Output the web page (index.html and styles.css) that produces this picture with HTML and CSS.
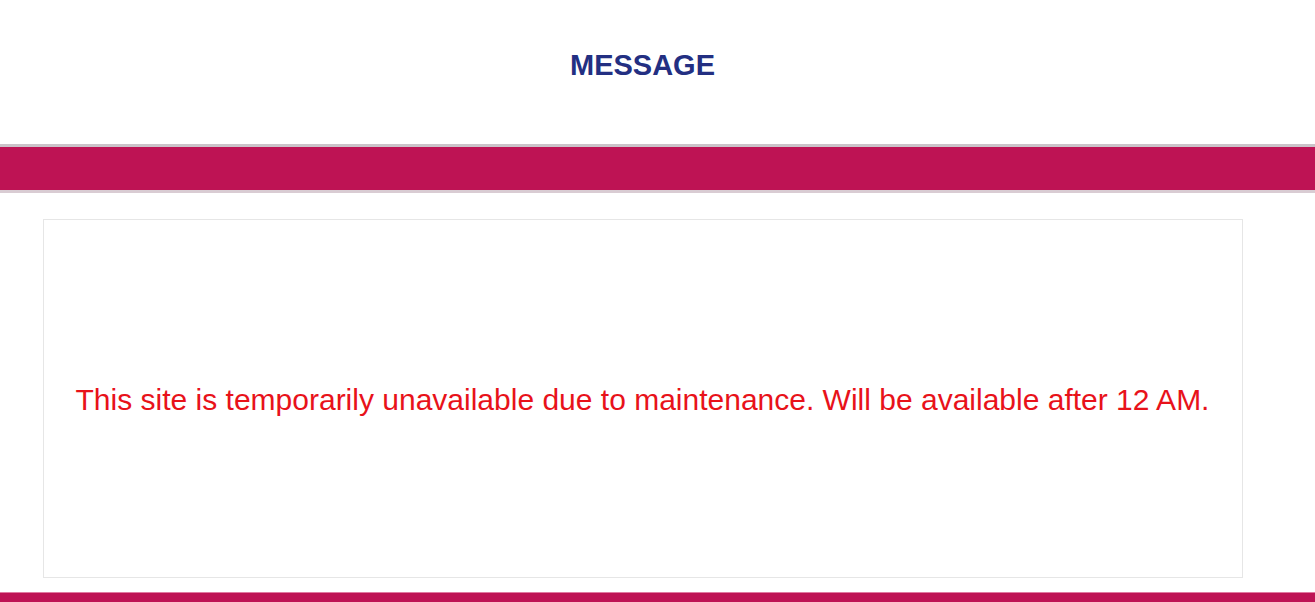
FILE: index.html
```html
<!DOCTYPE html>
<html lang="en">
<head>
  <meta charset="UTF-8" />
  <meta name="viewport" content="width=device-width, initial-scale=1.0" />
  <title>Message</title>
  <link rel="stylesheet" href="styles.css">
</head>
<body>
  <div class="header">
    <h1 class="title">MESSAGE</h1>
  </div>
  <div class="band"></div>
  <div class="content">
    <div class="message-box">
      <p class="notice">This site is temporarily unavailable due to maintenance. Will be available after 12 AM.</p>
    </div>
  </div>
  <div class="footer-band"></div>
</body>
</html>
```
FILE: styles.css
```css
body {
  margin: 0;
  font-family: "Liberation Sans", Arial, sans-serif;
  background: #ffffff;
}
.header {
  width: 1285px;
  height: 144px;
  display: flex;
  align-items: center;
  justify-content: center;
  padding-bottom: 14px;
  box-sizing: border-box;
}
.title {
  margin: 0;
  font-size: 29px;
  font-weight: bold;
  color: #232f82;
}
.band {
  height: 43px;
  background: #be1354;
  border-top: 3px solid #cbc3c9;
  border-bottom: 3px solid #d9ccd3;
}
.content {
  width: 1285px;
  padding: 26px 0 14px;
  display: flex;
  justify-content: center;
}
.message-box {
  width: 1198px;
  height: 357px;
  border: 1px solid #e6e6e6;
  display: flex;
  align-items: center;
  justify-content: center;
}
.notice {
  margin: 0;
  padding-top: 2px;
  font-size: 30px;
  color: #e8121a;
}
.footer-band {
  height: 10px;
  background: #be1354;
  border-top: 1px solid #e07aa0;
}
```
